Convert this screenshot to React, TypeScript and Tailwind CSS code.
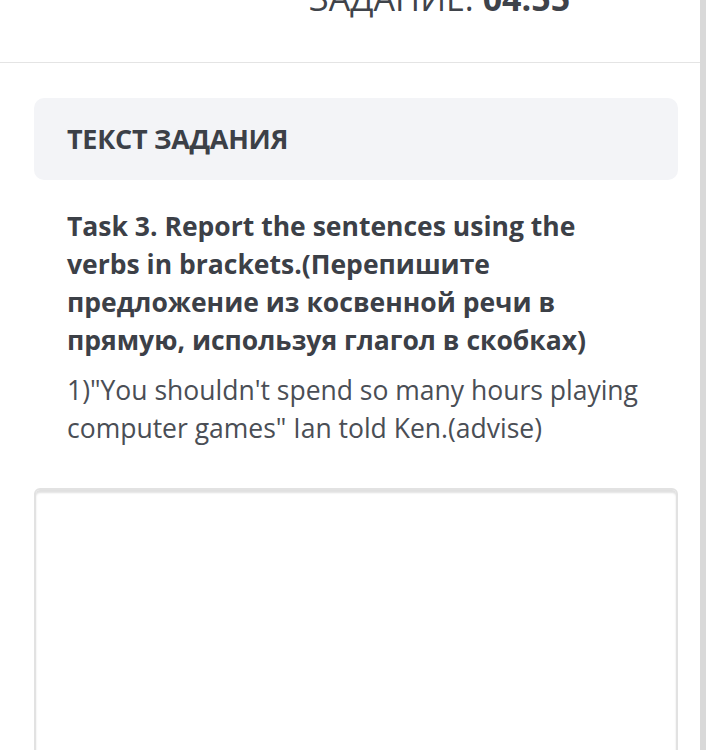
import React from "react";

export default function App() {
  return (
    <div className="flex w-[712px] h-[750px] overflow-hidden bg-white" style={{ fontFamily: '"Open Sans", sans-serif' }}>
      <div className="w-[700px] shrink-0 flex flex-col">
        <div className="h-[63px] border-b border-[#e4e4e4] overflow-hidden shrink-0">
          <p className="mt-[-20px] pl-[309px] text-[34px] leading-[36px] text-[#3f434a] whitespace-nowrap">
            ЗАДАНИЕ: <span className="font-bold">04:55</span>
          </p>
        </div>
        <div className="pl-[34px] pr-[22px] pt-[35px]">
          <div className="h-[82px] rounded-[10px] bg-[#f3f4f7] flex items-center pl-[33px]">
            <h2 className="text-[27px] leading-[38px] font-bold text-[#3c4047] tracking-[-0.3px]">ТЕКСТ ЗАДАНИЯ</h2>
          </div>
          <div className="pl-[33px] pt-[27px] pr-[30px]">
            <p className="text-[26.5px] leading-[38px] font-bold text-[#3c4047] w-[570px]">
              Task 3. Report the sentences using the verbs in brackets.(Перепишите предложение из косвенной речи в прямую, используя глагол в скобках)
            </p>
            <p className="mt-[12px] text-[26.5px] leading-[38px] text-[#4a4e55] w-[590px]">
              1)"You shouldn't spend so many hours playing computer games" Ian told Ken.(advise)
            </p>
          </div>
          <div className="mt-[41px] h-[300px] rounded-t-[6px] border-2 border-[#e2e2e2] shadow-[inset_0_3px_2px_rgba(0,0,0,0.12)]"></div>
        </div>
      </div>
      <div className="w-[6px] h-full bg-[#d9d9d9] shrink-0"></div>
      <div className="flex-1"></div>
    </div>
  );
}
